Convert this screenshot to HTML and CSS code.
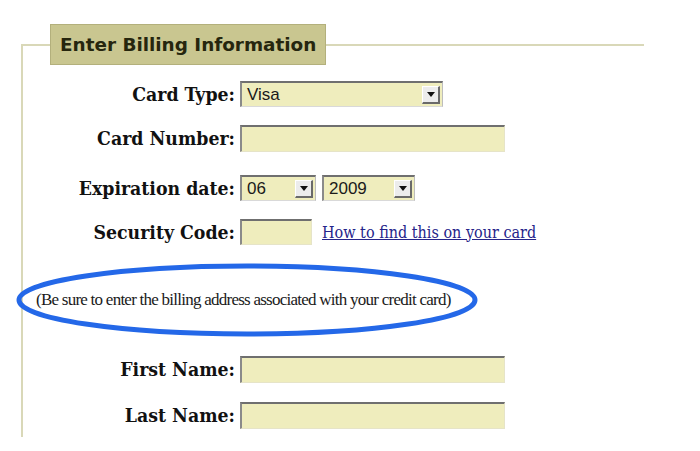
FILE: index.html
```html
<!DOCTYPE html>
<html>
<head>
<meta charset="utf-8">
<link rel="stylesheet" href="styles.css">
</head>
<body>
<fieldset class="billing">
  <legend class="billing-title">Enter Billing Information</legend>

  <div class="row row-first">
    <span class="label">Card Type:</span>
    <div class="select select-card"><span class="select-value">Visa</span><span class="select-btn"><span class="tri"></span></span></div>
  </div>

  <div class="row">
    <span class="label">Card Number:</span>
    <span class="input input-long"></span>
  </div>

  <div class="row row-wide">
    <span class="label">Expiration date:</span>
    <div class="controls">
      <div class="select select-month"><span class="select-value">06</span><span class="select-btn"><span class="tri"></span></span></div>
      <div class="select select-year"><span class="select-value">2009</span><span class="select-btn"><span class="tri"></span></span></div>
    </div>
  </div>

  <div class="row">
    <span class="label">Security Code:</span>
    <div class="controls">
      <span class="input input-short"></span>
      <a class="help-link" href="#">How to find this on your card</a>
    </div>
  </div>

  <div class="notice">
    <p class="notice-text">(Be sure to enter the billing address associated with your credit card)</p>
    <svg class="oval" width="470" height="80" viewBox="0 0 470 80">
      <ellipse cx="236" cy="40" rx="228" ry="34" fill="none" stroke="#2468e8" stroke-width="5"/>
    </svg>
  </div>

  <div class="row row-name1">
    <span class="label">First Name:</span>
    <span class="input input-long"></span>
  </div>

  <div class="row row-name2">
    <span class="label">Last Name:</span>
    <span class="input input-long"></span>
  </div>
</fieldset>
</body>
</html>
```

FILE: styles.css
```css
html, body {
  margin: 0;
  padding: 0;
  background: #ffffff;
}

body {
  font-family: "DejaVu Serif", serif;
  color: #111;
}

.billing {
  margin: 24px 0 0 21px;
  width: 623px;
  padding: 0 0 9px 0;
  border: none;
  border-top: 2px solid #d9d8b8;
  border-left: 2px solid #d9d8b8;
  box-sizing: border-box;
}

.billing-title {
  margin-left: 27px;
  padding: 9px 9px 8px 9px;
  background: #c9c690;
  border: 1px solid #b3b07c;
  font-family: "DejaVu Sans", sans-serif;
  font-weight: bold;
  font-size: 18.4px;
  line-height: 22px;
  color: #26260e;
}

.row {
  display: grid;
  grid-template-columns: 212px auto;
  column-gap: 5px;
  align-items: center;
  height: 26px;
  margin-top: 18px;
}

.row-first { margin-top: 16px; }
.row-wide { margin-top: 24px; }
.row-name1 { margin-top: 21px; }
.row-name2 { margin-top: 20px; }

.label {
  text-align: right;
  font-family: "DejaVu Serif Condensed", "DejaVu Serif", serif;
  font-weight: bold;
  font-size: 19.3px;
  color: #111;
  white-space: nowrap;
}

.controls {
  display: flex;
  align-items: center;
  gap: 6px;
}

.input {
  display: block;
  box-sizing: border-box;
  height: 27px;
  background: #efedbd;
  border-top: 2px solid #6f6f6f;
  border-left: 2px solid #8a8a8a;
  border-right: 1px solid #e6e4c8;
  border-bottom: 1px solid #e6e4c8;
}

.input-long { width: 265px; }
.input-short { width: 72px; height: 26px; }

.select {
  display: flex;
  align-items: center;
  box-sizing: border-box;
  height: 26px;
  background: #efedbd;
  border-top: 2px solid #6f6f6f;
  border-left: 2px solid #8a8a8a;
  border-right: 1px solid #bdbdbd;
  border-bottom: 1px solid #d9d9d9;
  padding-left: 5px;
}

.select-card { width: 203px; }
.select-month { width: 76px; }
.select-year { width: 93px; }

.select-value {
  flex: 1;
  font-family: "Liberation Sans", sans-serif;
  font-size: 17px;
  color: #1a1a1a;
}

.select-btn {
  display: flex;
  align-items: center;
  justify-content: center;
  box-sizing: border-box;
  width: 18px;
  height: 18px;
  margin-right: 2px;
  background: #ececec;
  border-top: 1px solid #ffffff;
  border-left: 1px solid #ffffff;
  border-right: 2px solid #6a6a6a;
  border-bottom: 2px solid #6a6a6a;
}

.tri {
  width: 0;
  height: 0;
  border-left: 4px solid transparent;
  border-right: 4px solid transparent;
  border-top: 5px solid #111;
}

.help-link {
  margin-left: 4px;
  font-family: "DejaVu Serif Condensed", "DejaVu Serif", serif;
  font-size: 16px;
  color: #25248a;
  text-decoration: underline;
}

.notice {
  position: relative;
  height: 70px;
  margin-top: 20px;
  display: flex;
  align-items: center;
}

.notice-text {
  margin: 0 0 0 13px;
  font-family: "Liberation Serif", serif;
  font-size: 17px;
  letter-spacing: -0.75px;
  color: #1a1a1a;
  white-space: nowrap;
}

.oval {
  position: absolute;
  left: -12px;
  top: -5px;
}
```
